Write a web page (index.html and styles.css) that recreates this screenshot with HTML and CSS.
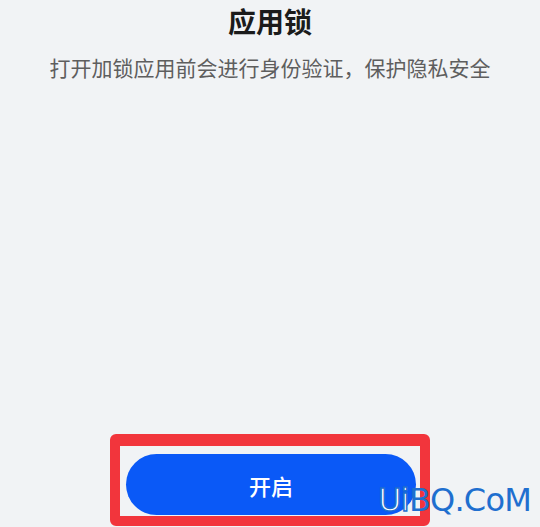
FILE: index.html
```html
<!DOCTYPE html>
<html lang="zh-CN">
<head>
    <meta charset="UTF-8">
    <meta name="viewport" content="width=device-width, initial-scale=1.0">
    <title>应用锁</title>
    <link rel="stylesheet" href="styles.css">
</head>
<body>

    <div class="page">
        <div class="header">
            <h1 class="title">应用锁</h1>
            <p class="desc">打开加锁应用前会进行身份验证，保护隐私安全</p>
        </div>

        <div class="footer">
            <div class="mark-box">
                <button class="btn-open">开启</button>
            </div>
        </div>
    </div>

    <div class="watermark"><span class="outline">Ui</span>BQ.CoM</div>

</body>
</html>
```

FILE: styles.css
```css
body {
    margin: 0;
    background-color: #f1f3f5;
    font-family: "Noto Sans CJK SC", "Noto Sans", sans-serif;
}
.page {
    height: 527px;
    display: flex;
    flex-direction: column;
    align-items: center;
}
.header {
    text-align: center;
}
.title {
    margin: 3px 0 0;
    font-size: 28px;
    line-height: 36px;
    font-weight: 700;
    color: #1b1b1b;
}
.desc {
    margin: 12px 0 0;
    font-size: 21px;
    line-height: 32px;
    color: #5e5e5e;
}
.footer {
    margin-top: auto;
    margin-bottom: 1px;
}
.mark-box {
    width: 290px;
    padding: 8px 4px 1px 6px;
    border: 10px solid #f2353c;
    border-top-width: 12px;
    border-radius: 6px;
}
.btn-open {
    display: block;
    width: 290px;
    height: 61px;
    border: none;
    border-radius: 31px;
    background: #0a59f7;
    color: white;
    font-family: "Noto Sans CJK SC", sans-serif;
    font-size: 22px;
    font-weight: 500;
}
.watermark {
    position: absolute;
    right: 9px;
    bottom: 8px;
    font-family: "DejaVu Sans", sans-serif;
    font-size: 32px;
    color: #1f6fcf;
    letter-spacing: -0.8px;
}
.outline {
    color: #ffffff;
    -webkit-text-stroke: 1.5px #1f6fcf;
}
```
